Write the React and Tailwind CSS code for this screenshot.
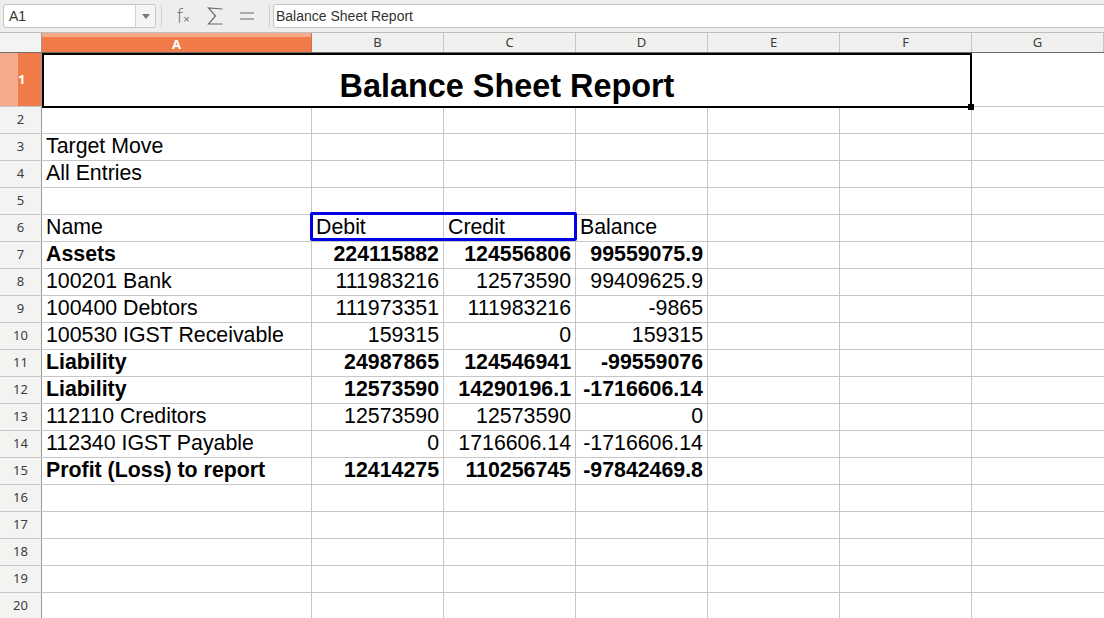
import React from "react";

const COLS = ["A", "B", "C", "D", "E", "F", "G"];
const WIDTHS = ["w-[270px]", "w-[132px]", "w-[132px]", "w-[132px]", "w-[132px]", "w-[132px]", "flex-1"];

// row number -> cells A..D, bold flag
const ROWS = {
  3: { cells: ["Target Move"] },
  4: { cells: ["All Entries"] },
  6: { cells: ["Name", "Debit", "Credit", "Balance"], textHead: true },
  7: { cells: ["Assets", "224115882", "124556806", "99559075.9"], bold: true },
  8: { cells: ["100201 Bank", "111983216", "12573590", "99409625.9"] },
  9: { cells: ["100400 Debtors", "111973351", "111983216", "-9865"] },
  10: { cells: ["100530 IGST Receivable", "159315", "0", "159315"] },
  11: { cells: ["Liability", "24987865", "124546941", "-99559076"], bold: true },
  12: { cells: ["Liability", "12573590", "14290196.1", "-1716606.14"], bold: true },
  13: { cells: ["112110 Creditors", "12573590", "12573590", "0"] },
  14: { cells: ["112340 IGST Payable", "0", "1716606.14", "-1716606.14"] },
  15: { cells: ["Profit (Loss) to report", "12414275", "110256745", "-97842469.8"], bold: true },
};

function Toolbar() {
  return (
    <div className="flex items-center h-[33px] bg-[#efeeed] border-b border-[#bdbdbd] pl-[3px] gap-0">
      {/* Name box */}
      <div className="flex h-[24px] w-[153px] rounded-[3px] border border-[#c4c4c4] bg-white overflow-hidden">
        <div className="flex-1 flex items-center pl-[5px] text-[14px] text-[#333]">A1</div>
        <div className="w-[20px] border-l border-[#d0d0d0] bg-[#f4f4f4] flex items-center justify-center">
          <svg width="8" height="5" viewBox="0 0 8 5">
            <path d="M0 0 L8 0 L4 5 Z" fill="#777" />
          </svg>
        </div>
      </div>
      <div className="w-px h-[22px] bg-[#cfcfcf] ml-[5px]" />
      {/* fx */}
      <div className="w-[32px] flex items-center justify-center text-[#6b6b6b] ml-[5px]">
        <span className="text-[19px] leading-none font-['DejaVu_Sans',sans-serif] font-light">f</span>
        <span className="text-[11px] leading-none mt-[6px]">×</span>
      </div>
      {/* sigma */}
      <div className="w-[32px] flex items-center justify-center">
        <svg width="17" height="18" viewBox="0 0 17 18">
          <path d="M15.5 2 L1.5 1 L8.5 9 L1.5 17 L15.5 17" fill="none" stroke="#6b6b6b" strokeWidth="1.2" />
        </svg>
      </div>
      {/* equals */}
      <div className="w-[32px] flex items-center justify-center">
        <svg width="14" height="10" viewBox="0 0 14 10">
          <path d="M0 2 H14 M0 8 H14" stroke="#6b6b6b" strokeWidth="1.2" />
        </svg>
      </div>
      <div className="w-px h-[22px] bg-[#cfcfcf] ml-[6px]" />
      {/* formula input */}
      <div className="flex-1 h-[24px] ml-[3px] -mr-[4px] rounded-[3px] border border-[#c4c4c4] bg-white flex items-center pl-[2px] text-[14px] text-[#333]">
        Balance Sheet Report
      </div>
    </div>
  );
}

function ColumnHeader() {
  return (
    <div className="flex h-[20px] bg-[#f0f0ef] border-b border-[#6e6e6e] font-['Noto_Sans',sans-serif] text-[13px] text-[#3c3c3c]">
      <div className="w-[42px] border-r border-[#9a9a9a] bg-[#f3f3f2]" />
      {COLS.map((c, i) =>
        c === "A" ? (
          <div key={c} className={`${WIDTHS[i]} flex flex-col border-r border-[#d07050]`}>
            <div className="h-[4px] bg-[#f5aa8c]" />
            <div className="flex-1 bg-[#f07a48] flex items-center justify-center text-white font-bold text-[13px] leading-none">
              A
            </div>
          </div>
        ) : (
          <div key={c} className={`${WIDTHS[i]} flex items-center justify-center border-r border-[#c6c6c6]`}>
            {c}
          </div>
        )
      )}
    </div>
  );
}

function RowNum({ n }) {
  return (
    <div className="w-[42px] shrink-0 border-r border-[#9a9a9a] bg-[#f3f3f2] flex items-center justify-center text-[13px] text-[#3c3c3c] font-['Noto_Sans',sans-serif]">
      {n}
    </div>
  );
}

function TitleRow() {
  return (
    <div className="flex items-start h-[54px] border-b border-[#c6c6c6]">
      <div className="w-[42px] h-[53px] shrink-0 flex border-r border-[#9a9a9a]">
        <div className="w-[20px] bg-[#f6ab8e]" />
        <div className="flex-1 bg-[#f07a48] flex items-center text-white text-[13px] font-bold font-['Noto_Sans',sans-serif] -ml-[2px]">
          1
        </div>
      </div>
      {/* merged A1:F1 */}
      <div className="relative w-[930px] h-[55px] border-2 border-black flex items-end justify-center pb-[1px]">
        <span className="text-[32.4px] leading-[38px] font-bold text-black">Balance Sheet Report</span>
        <div className="absolute -right-[4px] -bottom-[4px] w-[6px] h-[6px] bg-black" />
      </div>
      <div className="flex-1" />
    </div>
  );
}

function DataRow({ n }) {
  const row = ROWS[n];
  return (
    <div className="flex h-[27px] border-b border-[#c6c6c6]">
      <RowNum n={n} />
      {COLS.map((c, i) => {
        const val = row?.cells[i];
        const numeric = row && !row.textHead && i > 0 && val !== undefined;
        return (
          <div
            key={c}
            className={`${WIDTHS[i]} ${i < 6 ? "border-r border-[#c6c6c6]" : ""} flex items-center px-[4px] pb-[1px] whitespace-nowrap overflow-visible ${
              numeric ? "justify-end" : "justify-start"
            } ${row?.bold ? "font-bold" : ""}`}
          >
            {val}
          </div>
        );
      })}
    </div>
  );
}

export default function App() {
  const rows = [];
  for (let n = 2; n <= 20; n++) rows.push(n);
  return (
    <div className="w-[1104px] h-[618px] overflow-hidden bg-white font-['Liberation_Sans',Arial,sans-serif]">
      <Toolbar />
      <ColumnHeader />
      <div className="relative text-[21.33px] text-black">
        <TitleRow />
        {rows.map((n) => (
          <DataRow key={n} n={n} />
        ))}
        {/* selection frame over B6:C6 */}
        <div className="absolute left-[310px] top-[159px] w-[267px] h-[29px] border-[3px] border-[#0000e6] rounded-[2px] pointer-events-none" />
      </div>
    </div>
  );
}
